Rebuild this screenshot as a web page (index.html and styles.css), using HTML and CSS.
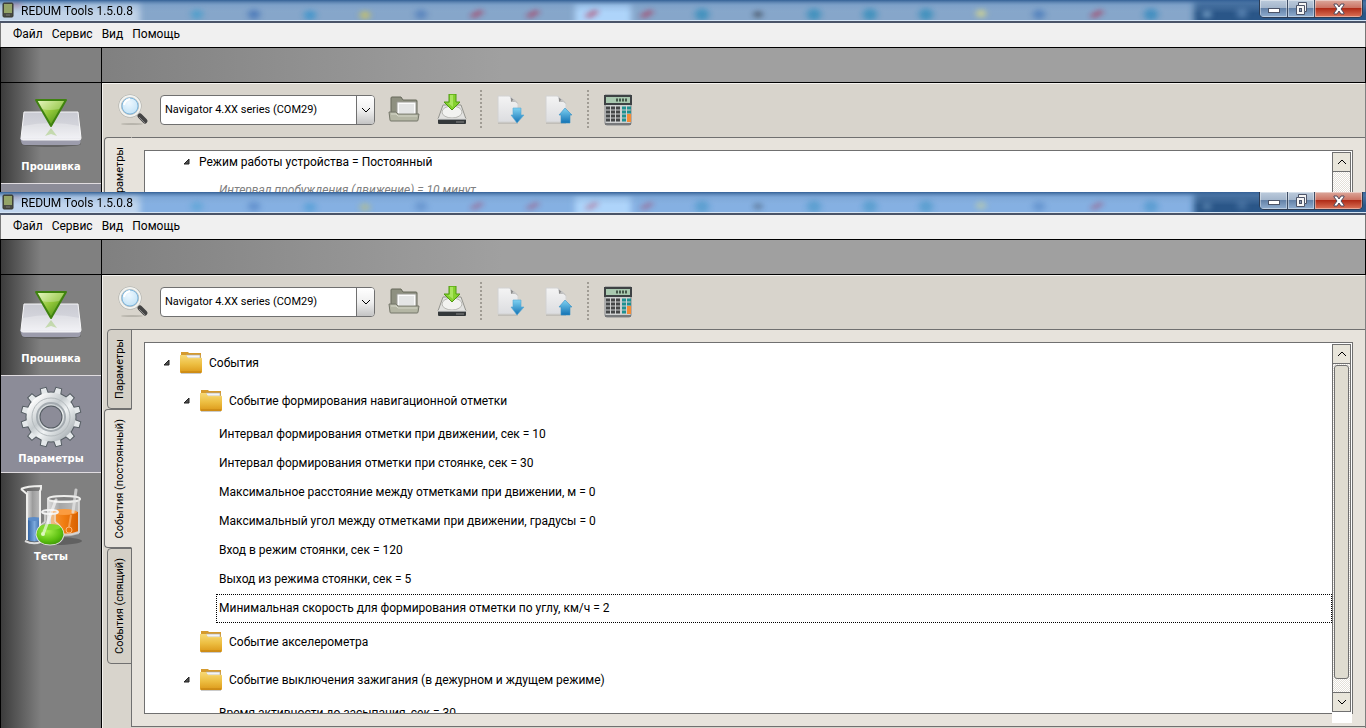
FILE: index.html
```html
<!DOCTYPE html>
<html lang="ru">
<head>
    <meta charset="UTF-8">
    <meta name="viewport" content="width=device-width, initial-scale=1.0">
    <title>REDUM Tools 1.5.0.8</title>
    <link rel="stylesheet" href="styles.css">
</head>
<body>
    <!-- Icons -->
    <svg class="sprite" width="0" height="0" aria-hidden="true">
        <defs>
            <linearGradient id="gGreen" x1="0" y1="0" x2="1" y2="1">
                <stop offset="0" stop-color="#e4f7b4"/><stop offset=".45" stop-color="#93c83a"/><stop offset="1" stop-color="#2f7d08"/>
            </linearGradient>
            <linearGradient id="gSlab" x1="0" y1="0" x2="0" y2="1">
                <stop offset="0" stop-color="#c9cad2"/><stop offset=".5" stop-color="#d4d5dc"/><stop offset="1" stop-color="#eeeef3"/>
            </linearGradient>
            <linearGradient id="gSteel" x1="0" y1="0" x2="1" y2="1">
                <stop offset="0" stop-color="#ffffff"/><stop offset=".4" stop-color="#c4cacd"/><stop offset=".6" stop-color="#f0f3f4"/><stop offset="1" stop-color="#aeb5b9"/>
            </linearGradient>
            <linearGradient id="gFolder" x1="0" y1="0" x2="0" y2="1">
                <stop offset="0" stop-color="#f7d978"/><stop offset=".5" stop-color="#edbf42"/><stop offset="1" stop-color="#dc9818"/>
            </linearGradient>
            <linearGradient id="gBlue" x1="0" y1="0" x2="0" y2="1">
                <stop offset="0" stop-color="#7fd2f2"/><stop offset="1" stop-color="#1272b4"/>
            </linearGradient>
            <linearGradient id="gPaper" x1="0" y1="0" x2="0" y2="1">
                <stop offset="0" stop-color="#f4f4f4"/><stop offset="1" stop-color="#dcdde0"/>
            </linearGradient>
            <linearGradient id="gOrange" x1="0" y1="0" x2="1" y2="0">
                <stop offset="0" stop-color="#f79a3c"/><stop offset=".5" stop-color="#f07c10"/><stop offset="1" stop-color="#d86000"/>
            </linearGradient>
            <linearGradient id="gTank" x1="0" y1="0" x2="1" y2="0">
                <stop offset="0" stop-color="#3465a4"/><stop offset=".5" stop-color="#7ba8dc"/><stop offset="1" stop-color="#3465a4"/>
            </linearGradient>
            <linearGradient id="gGlass" x1="0" y1="0" x2="1" y2="0">
                <stop offset="0" stop-color="#fff" stop-opacity=".75"/><stop offset=".4" stop-color="#fff" stop-opacity=".3"/><stop offset="1" stop-color="#fff" stop-opacity=".5"/>
            </linearGradient>
            <radialGradient id="gFlask" cx=".4" cy=".3" r=".8">
                <stop offset="0" stop-color="#a6f04c"/><stop offset=".6" stop-color="#5cc010"/><stop offset="1" stop-color="#348a04"/>
            </radialGradient>
            <radialGradient id="gLens" cx=".45" cy=".35" r=".7">
                <stop offset="0" stop-color="#eef8ff"/><stop offset="1" stop-color="#b9def4"/>
            </radialGradient>
            <linearGradient id="gBar" x1="0" y1="0" x2="0" y2="1">
                <stop offset="0" stop-color="#335f94"/><stop offset=".4" stop-color="#6f97c4" stop-opacity=".35"/><stop offset="1" stop-color="#8fb0d6" stop-opacity="0"/>
            </linearGradient>
            <filter id="soft" x="-50%" y="-50%" width="200%" height="200%"><feGaussianBlur stdDeviation="3"/></filter>
        </defs>

        <symbol id="i-app" viewBox="0 0 12 16">
            <rect x="1" y="1" width="10" height="14" rx="1" fill="#4a4c44" stroke="#34362f"/>
            <rect x="2" y="2" width="8" height="9" fill="#94a468"/>
            <path d="M4 13h4" stroke="#777"/>
        </symbol>
        <symbol id="i-flash" viewBox="0 0 64 64">
            <ellipse cx="32" cy="51" rx="30" ry="3" fill="#444" opacity=".5"/>
            <path d="M1 45l2 6q1 1 3 1h52q2 0 3-1l1-6z" fill="#9c9cac"/>
            <path d="M5 19h54l3 26q0 2-2 2H4q-2 0-2-2z" fill="url(#gSlab)" stroke="#f6f6f8"/>
            <path d="M4 33q28-6 57 0l1 12H2z" fill="#fff" opacity=".3"/>
            <path d="M32 35l-6 8 6-2 6 2z" fill="#8cc050" opacity=".4"/>
            <path d="M17 7h30L32 33z" fill="url(#gGreen)" stroke="#3f8210" stroke-width="2" stroke-linejoin="round"/>
            <path d="M19 8h26l-5 8q-10 2-17 0z" fill="#fff" opacity=".25"/>
        </symbol>
        <symbol id="i-gear" viewBox="0 0 64 64">
            <circle cx="32" cy="32" r="18" fill="none" stroke="#545c62" stroke-width="15"/>
            <g fill="#e4e8ea" stroke="#545c62" transform="rotate(15 32 32)">
                <path d="M28 12l1-10h6l1 10zM28 52l1 10h6l1-10z"/>
                <path d="M28 12l1-10h6l1 10zM28 52l1 10h6l1-10z" transform="rotate(30 32 32)"/>
                <path d="M28 12l1-10h6l1 10zM28 52l1 10h6l1-10z" transform="rotate(60 32 32)"/>
                <path d="M28 12l1-10h6l1 10zM28 52l1 10h6l1-10z" transform="rotate(90 32 32)"/>
                <path d="M28 12l1-10h6l1 10zM28 52l1 10h6l1-10z" transform="rotate(120 32 32)"/>
                <path d="M28 12l1-10h6l1 10zM28 52l1 10h6l1-10z" transform="rotate(150 32 32)"/>
            </g>
            <circle cx="32" cy="32" r="18" fill="none" stroke="url(#gSteel)" stroke-width="13"/>
            <circle cx="32" cy="32" r="19" fill="none" stroke="#b4babd" stroke-width="1"/>
            <circle cx="32" cy="32" r="14" fill="none" stroke="#a4abb0" stroke-width="2"/>
        </symbol>
        <symbol id="i-tests" viewBox="0 0 64 64">
            <ellipse cx="36" cy="58" rx="27" ry="4" fill="#333" opacity=".4"/>
            <path d="M28 17h32v34q-16 5-32 0z" fill="url(#gGlass)"/>
            <path d="M32 29q14-4 27 0v20q-12 5-27 2z" fill="url(#gOrange)"/>
            <ellipse cx="45" cy="29" rx="13" ry="3" fill="#fb9c40"/>
            <ellipse cx="45" cy="16" rx="16" ry="3" fill="none" stroke="#eeeeec" stroke-width="2"/>
            <path d="M29 17v30q15 8 31 2V17" fill="none" stroke="#ddd" stroke-width="2" opacity=".8"/>
            <path d="M57 7l-3 22" stroke="#e8e8e8" stroke-width="3" opacity=".7" stroke-linecap="round"/>
            <path d="M52 32l-2 12" stroke="#ffc080" stroke-width="2" opacity=".6"/>
            <circle cx="50" cy="47" r="3" fill="none" stroke="#ffb878"/>
            <path d="M8 8h14v48H8z" fill="url(#gGlass)"/>
            <path d="M9 36h13v21q-7 3-13 0z" fill="url(#gTank)"/>
            <ellipse cx="15" cy="36" rx="7" ry="2" fill="#5c8cc8"/>
            <path d="M2 6q6-3 20-3v2q0 2-1 3v49M2 6l6 5v46" fill="none" stroke="#eeeeec" stroke-width="2"/>
            <path d="M6 58q8 4 16 1" fill="none" stroke="#ddd" stroke-width="2"/>
            <path d="M25 29h12v9q8 6 8 14 0 10-14 10T17 52q0-8 8-14z" fill="#e4e4e2" opacity=".45"/>
            <path d="M19 45q12-5 24 0 2 3 2 7-3 10-14 10t-14-10q0-4 2-7z" fill="url(#gFlask)"/>
            <ellipse cx="31" cy="44" rx="11" ry="3" fill="#82d830"/>
            <path d="M26 30v9q-9 5-9 13 2 10 14 10t14-10q0-8-9-13v-9" fill="none" stroke="#eee" opacity=".8"/>
            <ellipse cx="31" cy="29" rx="8" ry="2" fill="none" stroke="#f4f4f4" stroke-width="2"/>
            <path d="M37 17L25 49" stroke="#fff" stroke-width="3" opacity=".6" stroke-linecap="round"/>
            <circle cx="24" cy="51" r="2" fill="#dff8c0"/>
        </symbol>
        <symbol id="i-search" viewBox="0 0 32 32">
            <ellipse cx="14" cy="30" rx="11" ry="1" fill="#aaa69e" opacity=".7"/>
            <path d="M20 20l3 3" stroke="#aaa" stroke-width="3"/>
            <path d="M22 22l5 5" stroke="#444" stroke-width="5" stroke-linecap="round"/>
            <path d="M21 23l6 6" stroke="#888" stroke-width="1"/>
            <circle cx="12" cy="12" r="10" fill="url(#gLens)" stroke="#aaaca8" stroke-width="3"/>
            <circle cx="12" cy="12" r="10" fill="none" stroke="#f2f3f0" stroke-width="2"/>
            <circle cx="12" cy="12" r="8" fill="none" stroke="#80b6dc" stroke-width="1"/>
            <path d="M6 11q1-5 6-6" fill="none" stroke="#fff" stroke-width="2"/>
        </symbol>
        <symbol id="i-open" viewBox="0 0 32 32">
            <path d="M3 20V4q0-1 1-1h9l2 3h13q1 0 1 1v13z" fill="#8e9080" stroke="#66685a"/>
            <path d="M9 8h19v13H9z" fill="#fcfcfc" stroke="#9a9a94"/>
            <path d="M11 10h15v9H11z" fill="#e4e5e5"/>
            <path d="M1 18h7l2 2h21l-1 6q0 1-1 1H3q-1 0-1-1z" fill="#b4b6a4" stroke="#75776a"/>
            <path d="M3 20h5l2 2h19" fill="none" stroke="#d4d6c8"/>
        </symbol>
        <symbol id="i-save" viewBox="0 0 32 32">
            <path d="M7 11h18l5 14H2z" fill="#e2e2e0" stroke="#94948e"/>
            <ellipse cx="16" cy="18" rx="10" ry="6" fill="#f2f2f0" stroke="#b8b8b4"/>
            <path d="M2 25h28v4q0 1-1 1H3q-1 0-1-1z" fill="#34383a"/>
            <path d="M2 25h28" stroke="#fafafa"/>
            <path d="M21 27v2M23 27v2M25 27v2M27 27v2" stroke="#888"/>
            <path d="M13 0h7v8h4l-8 8-8-8h5z" fill="#85d12f" stroke="#4f9a10"/>
            <path d="M14 1h3v12l-5-4h2z" fill="#b8ee70" opacity=".7"/>
        </symbol>
        <symbol id="i-down" viewBox="0 0 32 32">
            <path d="M3 29h20" stroke="#aaa8a4" stroke-width="1"/>
            <path d="M3 2h12l8 8v18H3z" fill="url(#gPaper)" stroke="#d2d2d2"/>
            <path d="M14 2q2 0 2 6 6-1 8 2z" fill="#8c8c8c"/>
            <path d="M16 8q5-1 8 2l-5-5z" fill="#c4c4c4"/>
            <path d="M18 14h8v7h3l-7 8-6-8h2z" fill="url(#gBlue)" stroke="#56a8d4" stroke-width=".6"/>
        </symbol>
        <symbol id="i-up" viewBox="0 0 32 32">
            <path d="M3 29h20" stroke="#aaa8a4" stroke-width="1"/>
            <path d="M3 2h12l8 8v18H3z" fill="url(#gPaper)" stroke="#d2d2d2"/>
            <path d="M14 2q2 0 2 6 6-1 8 2z" fill="#8c8c8c"/>
            <path d="M16 8q5-1 8 2l-5-5z" fill="#c4c4c4"/>
            <path d="M22 14l7 7h-2v8h-9v-8h-2z" fill="url(#gBlue)" stroke="#3a90c4" stroke-width=".6"/>
        </symbol>
        <symbol id="i-calc" viewBox="0 0 32 32">
            <path d="M3 1h26v28q0 2-2 2H5q-2 0-2-2z" fill="#cfd1d1" stroke="#85878a"/>
            <path d="M2 1h28v10H2z" fill="#3e4244"/>
            <path d="M4 3h24v6H4z" fill="#a9c9b0"/>
            <path d="M14 6h12" stroke="#44584a" stroke-width="3" stroke-dasharray="2 1"/>
            <path d="M4 14h15M4 18h15M4 22h15M4 26h15" stroke="#454748" stroke-width="3" stroke-dasharray="4 1"/>
            <path d="M20 14h9M20 18h9M20 22h4M20 26h4" stroke="#1f9090" stroke-width="3" stroke-dasharray="4 1"/>
            <path d="M25 20h4v8h-4z" fill="#f28c38"/>
            <path d="M3 30h26" stroke="#77797b" stroke-width="2"/>
        </symbol>
        <symbol id="i-folder" viewBox="0 0 24 24">
            <path d="M2 22h20" stroke="#999" stroke-width="2" opacity=".5"/>
            <path d="M2 8V1h7l1 1h12v6z" fill="#d59a2e"/>
            <path d="M7 4h14v3H7z" fill="#f4f4f4" stroke="#aaa" stroke-width=".6"/>
            <path d="M1 4h6l2 3h14v14q0 1-1 1H2q-1 0-1-1z" fill="url(#gFolder)"/>
            <path d="M9 7h14" stroke="#fae6a0" stroke-width=".6" opacity=".6"/>
            <path d="M2 21h20" stroke="#c07f10"/>
        </symbol>
        <symbol id="i-node" viewBox="0 0 8 8">
            <path d="M6 1v5H1z" fill="#505050" stroke="#222"/>
        </symbol>
        <symbol id="i-chev-down" viewBox="0 0 10 6"><path d="M1 1l4 4 4-4" fill="none" stroke="#000"/></symbol>
        <symbol id="i-chev-up" viewBox="0 0 10 6"><path d="M1 5l4-4 4 4" fill="none" stroke="#000"/></symbol>
        <symbol id="i-min" viewBox="0 0 14 14"><rect x="1.5" y="6.5" width="11" height="4" fill="#fff" stroke="#4c5468"/></symbol>
        <symbol id="i-max" viewBox="0 0 14 14">
            <path d="M4.500 .5h8v9h-2v3h-8v-9h2z" fill="#f4f4f4" stroke="#4c5468"/>
            <path d="M4.500 3.500h6v6" fill="none" stroke="#4c5468"/>
            <rect x="5.500" y="6.500" width="2" height="3" fill="#8a9ab4" stroke="#4c5468"/>
        </symbol>
        <symbol id="i-close" viewBox="0 0 14 14">
            <path d="M2 2h3l2 3 2-3h3v1L9 7l3 4v1H9L7 9l-2 3H2v-1l3-4-3-4z" fill="#fff" stroke="#50485a"/>
        </symbol>
        <!-- Blurred desktop seen through the title bar -->
        <symbol id="i-glass" viewBox="0 0 1366 21" preserveAspectRatio="none">
            <g filter="url(#soft)">
                <rect x="1194" y="-8" width="190" height="40" fill="#2a5688"/>
                <rect x="575" y="3" width="56" height="24" fill="#aed4fa"/>
                <rect x="-10" y="-4" width="150" height="34" fill="#d4e2f2" opacity=".75"/>
            </g>
            <g class="blobs" filter="url(#soft)">
                <circle cx="16" cy="3" r="5" fill="#c86070"/>
                <circle cx="197" cy="15" r="6" fill="#3c9ccc"/>
                <circle cx="254" cy="15" r="6" fill="#3a6cb4"/>
                <circle cx="310" cy="16" r="6" fill="#2c90cc"/>
                <circle cx="365" cy="16" r="5" fill="#d8c84c"/>
                <circle cx="421" cy="15" r="6" fill="#4878b8"/>
                <path d="M472 18l10-7M528 18l10-7M587 18l10-7M642 18l10-7M1092 18l10-7" stroke="#b02848" stroke-width="5"/>
                <circle cx="702" cy="15" r="7" fill="#2088b8"/>
                <circle cx="758" cy="15" r="4" fill="#303844"/>
                <circle cx="814" cy="15" r="7" fill="#2088b8"/>
                <circle cx="870" cy="15" r="7" fill="#2088b8"/>
                <circle cx="926" cy="15" r="7" fill="#2088b8"/>
                <circle cx="981" cy="14" r="5" fill="#e4e080"/>
                <circle cx="1039" cy="15" r="6" fill="#4074b8"/>
                <circle cx="1151" cy="15" r="7" fill="#2484bc"/>
                <circle cx="1207" cy="15" r="4" fill="#a0c8e8"/>
                <circle cx="1242" cy="14" r="5" fill="#7098c4"/>
            </g>
            <rect width="1366" height="14" fill="url(#gBar)"/>
        </symbol>
    </svg>

    <div class="window window-back">
        <header class="titlebar">
            <svg class="glass"><use href="#i-glass"/></svg>
            <svg class="app-icon"><use href="#i-app"/></svg>
            <span class="title">REDUM Tools 1.5.0.8</span>
            <div class="win-buttons">
                <button class="win-btn" aria-label="Свернуть"><svg><use href="#i-min"/></svg></button>
                <button class="win-btn" aria-label="Восстановить"><svg><use href="#i-max"/></svg></button>
                <button class="win-btn win-close" aria-label="Закрыть"><svg><use href="#i-close"/></svg></button>
            </div>
        </header>
        <nav class="menubar">
            <button>Файл</button>
            <button>Сервис</button>
            <button>Вид</button>
            <button>Помощь</button>
        </nav>
        <div class="band"><div class="band-left"></div><div class="band-right"></div></div>
        <div class="client">
            <aside class="sidebar">
                <button class="side-item"><svg><use href="#i-flash"/></svg>Прошивка</button>
                <div class="side-item selected"></div>
            </aside>
            <main class="main">
                <div class="toolbar">
                    <button class="tool" aria-label="Поиск"><svg><use href="#i-search"/></svg></button>
                    <div class="combo">
                        <select aria-label="Устройство"><option>Navigator 4.XX series (COM29)</option></select>
                        <span class="combo-arrow"><svg><use href="#i-chev-down"/></svg></span>
                    </div>
                    <button class="tool" aria-label="Открыть"><svg><use href="#i-open"/></svg></button>
                    <button class="tool" aria-label="Сохранить"><svg><use href="#i-save"/></svg></button>
                    <span class="sep"></span>
                    <button class="tool" aria-label="Прочитать"><svg><use href="#i-down"/></svg></button>
                    <button class="tool" aria-label="Записать"><svg><use href="#i-up"/></svg></button>
                    <span class="sep"></span>
                    <button class="tool" aria-label="Калькулятор"><svg><use href="#i-calc"/></svg></button>
                </div>
                <div class="workspace">
                    <div class="tabs">
                        <button class="tab active"><span>Параметры</span></button>
                    </div>
                    <div class="panel">
                        <div class="tree">
                            <ul class="tree-list scrolled">
                                <li class="row leaf level-2"><svg class="node"><use href="#i-node"/></svg>Режим работы устройства = Постоянный</li>
                                <li class="row leaf level-3 disabled">Интервал пробуждения (движение) = 10 минут</li>
                            </ul>
                            <div class="scrollbar">
                                <button class="scroll-btn" aria-label="Вверх"><svg><use href="#i-chev-up"/></svg></button>
                                <div class="track"></div>
                            </div>
                        </div>
                    </div>
                </div>
            </main>
        </div>
    </div>

    <div class="window window-front">
        <header class="titlebar">
            <svg class="glass"><use href="#i-glass"/></svg>
            <svg class="app-icon"><use href="#i-app"/></svg>
            <span class="title">REDUM Tools 1.5.0.8</span>
            <div class="win-buttons">
                <button class="win-btn" aria-label="Свернуть"><svg><use href="#i-min"/></svg></button>
                <button class="win-btn" aria-label="Восстановить"><svg><use href="#i-max"/></svg></button>
                <button class="win-btn win-close" aria-label="Закрыть"><svg><use href="#i-close"/></svg></button>
            </div>
        </header>
        <nav class="menubar">
            <button>Файл</button>
            <button>Сервис</button>
            <button>Вид</button>
            <button>Помощь</button>
        </nav>
        <div class="band"><div class="band-left"></div><div class="band-right"></div></div>
        <div class="client">
            <aside class="sidebar">
                <button class="side-item"><svg><use href="#i-flash"/></svg>Прошивка</button>
                <button class="side-item selected"><svg><use href="#i-gear"/></svg>Параметры</button>
                <button class="side-item"><svg><use href="#i-tests"/></svg>Тесты</button>
            </aside>
            <main class="main">
                <div class="toolbar">
                    <button class="tool" aria-label="Поиск"><svg><use href="#i-search"/></svg></button>
                    <div class="combo">
                        <select aria-label="Устройство"><option>Navigator 4.XX series (COM29)</option></select>
                        <span class="combo-arrow"><svg><use href="#i-chev-down"/></svg></span>
                    </div>
                    <button class="tool" aria-label="Открыть"><svg><use href="#i-open"/></svg></button>
                    <button class="tool" aria-label="Сохранить"><svg><use href="#i-save"/></svg></button>
                    <span class="sep"></span>
                    <button class="tool" aria-label="Прочитать"><svg><use href="#i-down"/></svg></button>
                    <button class="tool" aria-label="Записать"><svg><use href="#i-up"/></svg></button>
                    <span class="sep"></span>
                    <button class="tool" aria-label="Калькулятор"><svg><use href="#i-calc"/></svg></button>
                </div>
                <div class="workspace">
                    <div class="tabs">
                        <button class="tab"><span>Параметры</span></button>
                        <button class="tab active"><span>События (постоянный)</span></button>
                        <button class="tab"><span>События (спящий)</span></button>
                    </div>
                    <div class="panel">
                        <div class="tree">
                            <ul class="tree-list">
                                <li class="row level-1"><svg class="node"><use href="#i-node"/></svg><svg class="folder"><use href="#i-folder"/></svg>События</li>
                                <li class="row level-2"><svg class="node"><use href="#i-node"/></svg><svg class="folder"><use href="#i-folder"/></svg>Событие формирования навигационной отметки</li>
                                <li class="row leaf level-3">Интервал формирования отметки при движении, сек = 10</li>
                                <li class="row leaf level-3">Интервал формирования отметки при стоянке, сек = 30</li>
                                <li class="row leaf level-3">Максимальное расстояние между отметками при движении, м = 0</li>
                                <li class="row leaf level-3">Максимальный угол между отметками при движении, градусы = 0</li>
                                <li class="row leaf level-3">Вход в режим стоянки, сек = 120</li>
                                <li class="row leaf level-3">Выход из режима стоянки, сек = 5</li>
                                <li class="row leaf level-3 focused">Минимальная скорость для формирования отметки по углу, км/ч = 2</li>
                                <li class="row level-2"><span class="node"></span><svg class="folder"><use href="#i-folder"/></svg>Событие акселерометра</li>
                                <li class="row level-2"><svg class="node"><use href="#i-node"/></svg><svg class="folder"><use href="#i-folder"/></svg>Событие выключения зажигания (в дежурном и ждущем режиме)</li>
                                <li class="row leaf level-3">Время активности до засыпания, сек = 30</li>
                            </ul>
                            <div class="scrollbar">
                                <button class="scroll-btn" aria-label="Вверх"><svg><use href="#i-chev-up"/></svg></button>
                                <div class="track"><div class="thumb"></div></div>
                                <button class="scroll-btn" aria-label="Вниз"><svg><use href="#i-chev-down"/></svg></button>
                            </div>
                            <div class="corner"></div>
                        </div>
                    </div>
                </div>
            </main>
        </div>
    </div>
</body>
</html>
```
FILE: styles.css
```css
* {
    box-sizing: border-box;
}
body {
    margin: 0;
    height: 100vh;
    display: flex;
    flex-direction: column;
    overflow: hidden;
    font-family: Roboto, 'Open Sans', sans-serif;
    font-size: 12px;
    line-height: 16px;
    color: #000;
}
button {
    margin: 0;
    padding: 0;
    border: 0;
    background: none;
    font: inherit;
    color: inherit;
}
svg {
    display: block;
    flex: none;
}
.sprite {
    position: absolute;
}

/* windows */
.window {
    display: flex;
    flex-direction: column;
    overflow: hidden;
}
.window-back {
    --blob-opacity: 0.65;
    flex: none;
    height: 192px;
}
.window-back .client {
    flex: none;
}
.window-back .tree {
    min-height: 360px;
}
.window-front {
    --blob-opacity: 0.4;
    flex: 1;
    min-height: 0;
}

/* title bar */
.titlebar {
    position: relative;
    flex: none;
    display: flex;
    align-items: flex-start;
    height: 23px;
    padding-left: 2px;
    background: #86a6ca;
    border-bottom: 2px solid #4a5468;
    box-shadow: inset 0 -1px #d4e4f4;
}
.window-front .titlebar {
    background: #85b0e2;
}
.glass {
    position: absolute;
    left: 0;
    top: 0;
    width: 100%;
    height: 20px;
}
.blobs {
    opacity: var(--blob-opacity);
}
.app-icon {
    position: relative;
    width: 12px;
    height: 16px;
    margin-top: 2px;
}
.title {
    position: relative;
    margin: 3px 0 0 7px;
}
.win-buttons {
    position: relative;
    display: flex;
    height: 18px;
    margin: 0 3px 0 auto;
    border: 1px solid #2c3c54;
    border-top: 0;
    border-radius: 0 0 5px 5px;
    overflow: hidden;
}
.win-btn {
    display: flex;
    justify-content: center;
    align-items: center;
    width: 27px;
    border-right: 1px solid #3c4c64;
    background: linear-gradient(#bccbdc 0, #a4b6cc 45%, #6482a8 50%, #90aed0 100%);
    box-shadow: inset 0 0 0 1px rgba(255, 255, 255, 0.4);
}
.win-btn:first-child {
    width: 28px;
}
.win-close {
    width: 47px;
    border-right: 0;
    background: linear-gradient(#dca89c 0, #cc7464 45%, #b02c18 50%, #dc7458 100%);
}
.win-btn svg {
    width: 14px;
    height: 14px;
}

/* menu */
.menubar {
    flex: none;
    display: flex;
    align-items: center;
    gap: 9px;
    height: 24px;
    padding: 0 12px 2px;
    background: #f0f0f0;
    border-right: 1px solid #777;
    border-left: 1px solid #777;
}

.band {
    flex: none;
    display: flex;
    height: 36px;
    border: 1px solid #000;
}
.band-left {
    width: 101px;
    border-right: 1px solid #000;
    background: linear-gradient(to right, #3c3c3c, #808080 40px);
}
.band-right {
    flex: 1;
    background: linear-gradient(to right, #808080, #a0a0a0 400px);
}

.client {
    flex: 1;
    min-height: 0;
    display: flex;
    border-left: 1px solid #000;
    border-right: 1px solid #808080;
}

/* sidebar */
.sidebar {
    flex: none;
    width: 101px;
    border-right: 1px solid #000;
    background: linear-gradient(to right, #3c3c3c, #808080 40px);
}
.side-item {
    display: flex;
    flex-direction: column;
    align-items: center;
    gap: 3px;
    width: 100%;
    min-height: 98px;
    padding: 10px 0 9px;
    font-family: 'DejaVu Sans Condensed', 'DejaVu Sans', sans-serif;
    font-size: 11px;
    font-weight: bold;
    line-height: 14px;
    color: #fff;
}
.side-item svg {
    width: 64px;
    height: 64px;
}
.side-item.selected {
    padding: 9px 0 6px;
    background: #8c8c98;
    border-top: 1px solid #e0dce0;
    border-bottom: 1px solid #e0dce0;
}

/* toolbar */
.main {
    flex: 1;
    min-width: 0;
    display: flex;
    flex-direction: column;
    background: #d8d4cc;
    border-left: 1px solid #f4f2ee;
    border-top: 1px solid #f4f2ee;
}
.toolbar {
    flex: none;
    display: flex;
    align-items: center;
    gap: 16px;
    height: 53px;
    padding: 0 0 2px 15px;
}
.tool svg {
    width: 32px;
    height: 32px;
}
.combo {
    position: relative;
    width: 215px;
    height: 30px;
    margin: 0 -3px 0 -6px;
}
.combo select {
    appearance: none;
    width: 100%;
    height: 100%;
    padding: 0 24px 0 4px;
    border: 1px solid #707070;
    border-radius: 4px;
    background: #fff;
    color: #000;
    font-family: inherit;
    font-size: 11px;
}
.combo-arrow {
    position: absolute;
    top: 1px;
    right: 1px;
    bottom: 1px;
    width: 18px;
    display: flex;
    align-items: center;
    justify-content: center;
    border-left: 1px solid #707070;
    border-radius: 0 3px 3px 0;
    background: linear-gradient(#fff, #f0f0f0 50%, #c4c4c4);
    pointer-events: none;
}
.combo-arrow svg, .scroll-btn svg {
    width: 10px;
    height: 6px;
}
.sep {
    width: 2px;
    height: 40px;
    margin: 0 -3px 0 -4px;
    background: repeating-linear-gradient(#a09c94 0 2px, transparent 2px 4px);
}

/* tabs and panel */
.workspace {
    flex: 1;
    min-height: 0;
    display: flex;
    padding: 0 0 1px 1px;
}
.tabs {
    flex: none;
    display: flex;
    flex-direction: column;
    align-items: flex-end;
    width: 28px;
}
.tab {
    flex: none;
    display: flex;
    align-items: center;
    justify-content: center;
    width: 25px;
    padding: 9px 0;
    border: 1px solid #707070;
    border-radius: 4px 0 0 4px;
    background: #d4d0c7;
    font-size: 11px;
}
.tab span {
    writing-mode: vertical-rl;
    transform: rotate(180deg);
}
.tab.active {
    position: relative;
    z-index: 1;
    width: 28px;
    padding-left: 3px;
    border-right-color: #e7e3dc;
    background: #e7e3dc;
}
.panel {
    flex: 1;
    min-width: 0;
    display: flex;
    margin-left: -1px;
    padding: 12px;
    border: 1px solid #707070;
    border-right: 0;
    background: #e7e3dc;
}

/* tree */
.tree {
    position: relative;
    flex: 1;
    min-width: 0;
    display: flex;
    border: 1px solid #707070;
    background: #fff;
}
.tree-list {
    flex: 1;
    min-width: 0;
    margin: 0;
    padding: 1px 0 0;
    list-style: none;
    overflow: hidden;
}
.tree-list.scrolled .row:first-child {
    margin-top: -5px;
}
.row {
    display: flex;
    align-items: center;
    height: 38px;
    white-space: nowrap;
}
.row.leaf {
    height: 29px;
}
.level-1 {
    padding-left: 18px;
}
.level-2 {
    padding-left: 38px;
}
.level-3 {
    margin-left: 71px;
    padding: 0 0 2px 3px;
}
.node {
    width: 8px;
    height: 8px;
    margin-right: 8px;
}
.folder {
    width: 24px;
    height: 24px;
    margin-right: 6px;
}
.disabled {
    color: #808080;
    font-style: italic;
}
.focused {
    padding-left: 2px;
    border: 1px dotted #000;
}
.scrollbar {
    flex: none;
    display: flex;
    flex-direction: column;
    width: 19px;
    margin: 1px 1px 1px 0;
    border: 1px solid #707070;
}
.scroll-btn {
    flex: none;
    display: flex;
    align-items: center;
    justify-content: center;
    height: 19px;
    border-bottom: 1px solid #707070;
    background: #e8e5da;
}
.scroll-btn:last-child {
    border-top: 1px solid #707070;
    border-bottom: 0;
}
.track {
    flex: 1;
    padding: 1px 1px 13px;
    background: repeating-conic-gradient(#fff 0 25%, #e4e0d8 0 50%) 0 0 / 2px 2px;
}
.thumb {
    height: 100%;
    border: 1px solid #707070;
    border-radius: 3px;
    background: #dfdcd0;
}
/* white patch under the scrollbar */
.corner {
    position: absolute;
    right: 0;
    bottom: -10px;
    width: 20px;
    height: 11px;
    background: #fff;
}
```
